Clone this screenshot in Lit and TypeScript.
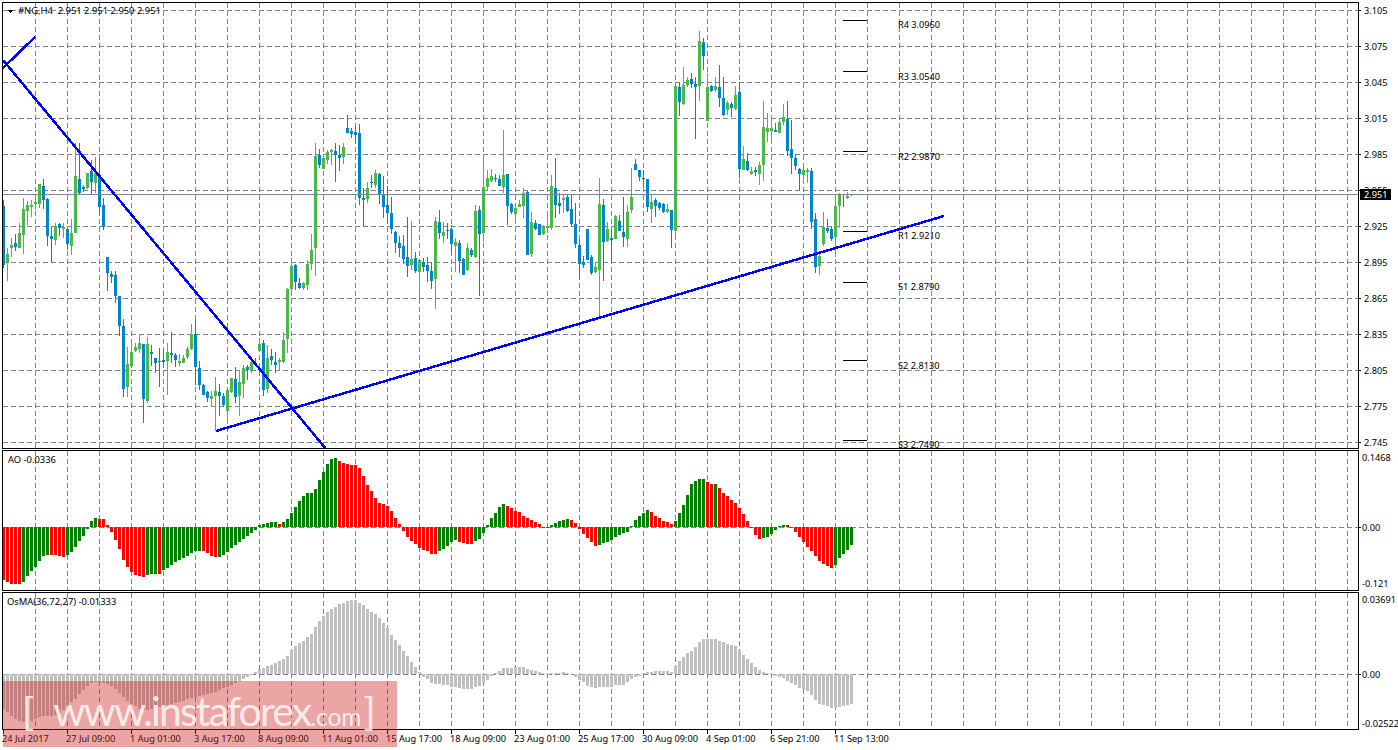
import { css, html, LitElement, svg } from 'lit';
import { customElement } from 'lit/decorators.js';

// one row per bar: green?, body top, body bottom, wick top, wick bottom (page pixels)
const CANDLES: number[][] = [
  [0,206,265,200,268],[1,254,263,248,281],[1,245,248,238,257],[0,243,247,234,251],[1,233,248,223,248],
  [1,209,235,198,254],[1,205,211,201,225],[1,205,207,200,217],[1,202,204,197,210],[1,184,204,184,208],
  [0,186,200,179,209],[0,199,236,198,246],[0,236,239,227,263],[1,226,240,223,245],[0,224,228,223,236],
  [1,227,229,223,238],[0,229,244,228,250],[1,233,246,219,255],[1,176,233,143,233],[0,179,193,143,195],
  [0,187,189,185,192],[1,173,188,173,189],[0,171,182,160,195],[1,173,183,157,193],[0,175,207,159,213],
  [0,205,227,198,230],[0,257,273,257,291],[0,274,277,271,283],[0,275,296,271,303],[0,296,326,296,336],
  [0,326,389,319,397],[1,364,387,347,397],[1,352,366,340,366],[1,347,351,343,352],[1,343,349,335,353],
  [0,344,399,344,423],[1,344,401,337,403],[0,352,354,345,366],[0,358,363,358,373],[0,361,362,348,387],
  [0,360,362,349,366],[1,352,361,343,395],[0,353,355,332,363],[0,355,360,353,367],[1,361,363,354,366],
  [1,358,363,355,363],[1,349,357,347,359],[1,334,349,324,350],[0,334,367,320,385],[0,368,385,361,390],
  [0,385,395,384,395],[0,392,398,391,402],[1,396,399,391,407],[1,391,396,377,431],[0,392,396,384,416],
  [0,396,405,393,407],[1,390,411,390,420],[1,378,392,378,393],[0,379,397,367,403],[1,382,396,371,416],
  [1,368,384,365,398],[0,367,370,365,380],[1,362,371,358,373],[0,363,365,358,365],[1,344,351,338,352],
  [0,343,390,340,396],[1,358,389,345,393],[0,356,360,349,365],[0,362,365,352,373],[1,360,362,358,370],
  [1,340,362,332,363],[1,289,339,288,353],[1,266,289,258,292],[0,265,282,264,290],[0,283,288,278,289],
  [1,283,288,282,290],[1,264,285,260,290],[1,250,264,234,270],[1,156,248,143,276],[0,155,165,149,168],
  [1,158,169,155,169],[1,152,160,150,164],[1,150,152,149,165],[0,151,155,143,182],[0,155,158,145,171],
  [1,147,157,143,164],[0,128,133,115,133],[0,131,134,128,138],[0,132,135,126,142],[0,133,198,124,205],
  [0,198,200,188,227],[1,188,199,182,203],[0,182,183,175,188],[1,173,185,170,188],[0,174,194,173,204],
  [0,194,207,176,218],[0,205,213,186,223],[0,213,229,197,234],[0,232,243,231,253],[0,243,248,236,257],
  [0,246,259,235,264],[0,257,266,217,277],[1,259,265,221,270],[0,258,271,252,273],[1,260,272,260,298],
  [0,262,267,258,272],[0,265,271,257,282],[0,271,281,263,289],[1,221,279,217,309],[0,222,233,210,239],
  [1,232,236,222,243],[0,230,231,223,239],[0,229,244,225,253],[1,242,246,238,272],[0,243,261,240,273],
  [0,259,275,258,275],[1,248,270,243,271],[0,250,255,248,257],[1,211,257,205,258],[0,210,234,206,296],
  [1,187,233,159,242],[1,178,187,170,190],[1,176,181,169,182],[0,178,179,174,182],[0,179,186,175,186],
  [1,175,187,130,193],[0,174,206,174,225],[0,204,212,203,214],[1,208,214,207,221],[1,204,207,200,207],
  [1,193,206,188,218],[0,192,255,191,255],[1,222,254,212,257],[0,223,229,220,230],[0,224,235,224,235],
  [1,226,234,225,235],[1,226,228,213,233],[1,186,228,175,230],[0,188,205,158,218],[0,203,206,193,214],
  [1,198,200,194,213],[0,197,211,195,212],[0,209,224,195,227],[0,224,244,203,248],[0,245,264,240,280],
  [0,262,265,256,268],[0,229,260,229,260],[0,257,273,255,275],[1,267,272,262,273],[1,204,270,178,317],
  [0,205,242,199,281],[1,229,241,222,242],[0,238,240,229,263],[1,216,239,215,239],[0,221,231,215,231],
  [0,232,237,197,247],[1,212,239,205,247],[1,197,210,168,213],[0,164,170,159,170],[0,170,177,170,181],
  [0,178,179,170,187],[0,179,207,179,212],[1,202,209,195,223],[0,200,206,198,217],[0,203,208,202,210],
  [0,204,212,203,213],[1,209,212,204,213],[0,210,230,210,248],[1,86,231,83,235],[0,87,102,83,116],
  [1,85,104,67,105],[1,80,85,77,87],[0,79,84,73,88],[0,84,87,77,139],[1,41,86,31,101],
  [0,42,56,38,70],[1,87,121,73,121],[0,86,91,85,92],[1,86,90,77,92],[0,87,98,65,107],
  [0,98,115,77,116],[1,103,110,101,115],[0,104,108,102,117],[1,95,109,86,110],[0,92,169,82,178],
  [1,159,170,146,170],[0,161,170,153,171],[1,171,174,167,175],[0,170,172,167,176],[1,165,174,162,185],
  [1,127,165,101,181],[1,128,132,113,142],[1,128,131,118,143],[0,130,132,123,132],[1,122,133,118,133],
  [1,117,122,104,125],[0,119,151,101,156],[0,149,158,120,174],[0,158,166,155,170],[0,169,174,168,190],
  [1,170,175,168,183],[1,170,172,168,183],[0,171,222,168,229],[0,219,267,213,273],[1,256,266,253,275],
  [1,227,244,212,246],[0,228,231,219,233],[0,229,239,226,241],[1,206,237,200,257],[1,195,206,193,228],
  [0,194,195,194,207],[1,196,198,192,199],[0,194,195,194,196],
];

// awesome oscillator, height in px from the zero row
const AO = [
  -53,-55,-57,-57,-57,-55,-49,-44,-40,-34,-29,-28,-28,-28,-29,-30,-28,-25,-20,-14,-9,-2,6,9,8,8,2,-5,-13,-22,
  -33,-40,-45,-48,-49,-50,-48,-47,-47,-47,-43,-41,-38,-35,-33,-31,-29,-26,-24,-24,-24,-26,-29,-30,-30,-28,-25,-21,-18,-15,
  -12,-9,-6,-3,2,3,4,5,5,3,5,8,14,20,26,31,34,34,38,47,55,63,68,69,66,64,63,62,62,59,
  51,42,36,29,24,23,21,16,9,3,-4,-10,-14,-17,-21,-23,-24,-27,-27,-24,-22,-19,-15,-13,-15,-16,-17,-17,-14,-12,
  -6,2,9,14,20,23,21,19,16,15,11,9,7,5,3,-1,-1,2,4,6,7,8,7,4,-2,-7,-11,-15,-19,-18,
  -16,-15,-13,-10,-8,-6,-5,1,7,11,14,17,15,11,9,6,5,3,6,14,22,32,43,46,48,48,45,43,43,39,
  34,31,27,24,19,13,6,-1,-8,-12,-11,-10,-7,-3,1,2,2,-1,-5,-10,-15,-20,-24,-29,-34,-37,-39,-41,-38,-31,
  -27,-23,-18,
];
const AO_RED = new Set([
  0,1,2,3,4,12,13,14,15,24,25,26,27,28,29,30,31,32,33,34,35,39,50,51,52,53,69,
  84,85,86,87,88,89,90,91,92,93,94,95,96,97,98,99,100,101,102,103,104,105,106,107,108,
  114,115,116,117,126,127,128,129,130,131,132,133,134,135,136,142,143,144,145,146,147,148,
  162,163,164,165,166,167,176,177,179,180,181,182,183,184,185,186,187,188,189,
  196,197,198,199,200,201,202,203,204,205,206,207,
]);

const OSMA = [
  -35,-38,-42,-45,-47,-48,-49,-47,-45,-43,-42,-42,-42,-41,-39,-36,-32,-28,-25,-20,-16,-12,-9,-8,-8,-9,-10,-12,-15,-19,
  -23,-27,-30,-32,-35,-36,-36,-35,-34,-33,-32,-31,-30,-29,-28,-27,-25,-24,-23,-22,-21,-20,-19,-18,-16,-14,-13,-11,-9,-7,
  -5,-3,-1,2,5,6,8,9,11,13,15,18,24,28,31,33,37,40,47,53,58,62,65,67,70,71,73,74,74,71,
  69,65,62,60,56,51,46,39,34,29,23,18,12,7,2,-3,-5,-9,-10,-10,-11,-11,-13,-13,-14,-15,-15,-15,-13,-12,
  -9,-6,-2,1,3,6,6,6,7,7,7,5,4,3,2,1,-1,1,1,1,2,1,0,-3,-6,-8,-12,-13,-14,-13,
  -13,-13,-13,-11,-11,-11,-8,-5,-3,-2,1,2,2,3,3,3,3,2,8,13,17,21,23,27,32,35,35,35,35,33,
  32,30,29,28,24,19,15,11,7,4,2,1,-1,-2,-3,-4,-7,-9,-11,-14,-15,-17,-21,-26,-30,-31,-32,-34,-34,-33,
  -32,-31,-30,
];

const MAIN_PRICES = ['3.105','3.075','3.045','3.015','2.985','2.955','2.925','2.895','2.865','2.835','2.805','2.775','2.745'];

const PIVOTS = [
  { name: 'R4 3.0960', mark: 20, text: 24 },
  { name: 'R3 3.0540', mark: 71, text: 76 },
  { name: 'R2 2.9870', mark: 151, text: 156 },
  { name: 'R1 2.9210', mark: 231, text: 235 },
  { name: 'S1 2.8790', mark: 282, text: 286 },
  { name: 'S2 2.8130', mark: 360, text: 365 },
  { name: 'S3 2.7490', mark: 440, text: 444 },
];

const TIMES = [
  '24 Jul 2017','27 Jul 09:00','1 Aug 01:00','3 Aug 17:00','8 Aug 09:00','11 Aug 01:00','15 Aug 17:00',
  '18 Aug 09:00','23 Aug 01:00','25 Aug 17:00','30 Aug 09:00','4 Sep 01:00','6 Sep 21:00','11 Sep 13:00',
];

const barX = (i: number) => 2 + 4 * i;

function gridV(top: number, bottom: number) {
  let d = '';
  for (let x = 35.5; x < 1358; x += 32) d += `M${x} ${top}V${bottom}`;
  return svg`<path class="grid" d=${d}></path>`;
}

function histogram(values: number[], zero: number, pick: (i: number) => boolean) {
  let d = '';
  values.forEach((v, i) => {
    if (!pick(i) || v === 0) return;
    const top = v > 0 ? zero - v : zero;
    d += `M${barX(i)} ${top}h3v${Math.abs(v)}h-3z`;
  });
  return d;
}

@customElement('app-root')
export class AppRoot extends LitElement {
  static styles = css`
    :host {
      display: block;
      width: 1398px;
      height: 750px;
      background: #fff;
      overflow: hidden;
    }

    .chart {
      position: relative;
      display: flex;
      flex-direction: column;
      width: 1398px;
      height: 750px;
      font-family: "Noto Sans", "Liberation Sans", sans-serif;
      font-size: 9.2px;
      color: #000;
    }

    svg {
      display: block;
      flex: none;
    }

    svg path,
    svg rect,
    svg line {
      shape-rendering: crispEdges;
    }

    svg text {
      font-family: "Noto Sans", "Liberation Sans", sans-serif;
      font-size: 9.2px;
      fill: #000;
    }

    svg text.title {
      font-size: 9.4px;
    }

    .grid {
      fill: none;
      stroke: #778899;
      stroke-width: 1;
      stroke-dasharray: 5 3;
    }

    .bid {
      stroke: #778899;
      stroke-width: 1;
    }

    .frame {
      fill: none;
      stroke: #000;
      stroke-width: 1;
    }

    .mark {
      stroke: #000;
      stroke-width: 1;
    }

    .trend {
      stroke: #0000ff;
      stroke-width: 2.5;
    }

    .up {
      fill: #4cb848;
    }

    .up-wick {
      fill: none;
      stroke: #4cb848;
    }

    .down {
      fill: #0085c8;
    }

    .down-wick {
      fill: none;
      stroke: #0085c8;
    }

    .ao-green {
      fill: #008000;
    }

    .ao-red {
      fill: #ff0000;
    }

    .osma {
      fill: #c0c0c0;
    }

    .bid-box {
      fill: #000;
    }

    svg text.bid-text {
      fill: #fff;
    }

    .time-axis {
      display: grid;
      grid-template-columns: repeat(14, 64px);
      padding-left: 3px;
      white-space: nowrap;
    }

    .time-tick {
      width: 1px;
      height: 4px;
      background: #000;
    }

    .time-label {
      line-height: 10px;
      margin-left: -1px;
    }

    .watermark {
      position: absolute;
      left: 3px;
      top: 681px;
      width: 394px;
      height: 66px;
      display: flex;
      align-items: baseline;
      box-sizing: border-box;
      padding: 2px 0 0 20px;
      background: rgba(204, 30, 30, 0.4);
      color: rgba(255, 255, 255, 0.8);
      font-family: Lato, "Liberation Sans", sans-serif;
      line-height: 56px;
      white-space: nowrap;
    }

    .wm-bracket {
      font-family: "Liberation Sans", sans-serif;
      font-size: 37px;
      transform: translateY(-3px);
    }

    .wm-site {
      font-size: 41px;
      letter-spacing: -1.9px;
      margin-left: 20px;
    }

    .wm-tld {
      font-size: 24.5px;
    }

    .wm-close {
      margin-left: 3px;
    }
  `;

  renderMain() {
    const up = CANDLES.map((c, i) => ({ c, i })).filter((o) => o.c[0] === 1);
    const down = CANDLES.map((c, i) => ({ c, i })).filter((o) => o.c[0] === 0);
    const wicks = (list: { c: number[]; i: number }[]) =>
      list.map(({ c, i }) => `M${barX(i) + 1.5} ${c[3]}V${c[4]}`).join('');
    const bodies = (list: { c: number[]; i: number }[]) =>
      list.map(({ c, i }) => `M${barX(i)} ${c[1]}h3v${Math.max(c[2] - c[1], 1)}h-3z`).join('');
    let rows = '';
    for (let y = 10.5; y < 448; y += 36) rows += `M3 ${y}H1358`;

    return html`
      <svg width="1398" height="449" viewBox="0 0 1398 449">
        <path class="grid" d=${rows}></path>
        ${gridV(3, 448)}
        <path class="up-wick" d=${wicks(up)}></path>
        <path class="down-wick" d=${wicks(down)}></path>
        <path class="up" d=${bodies(up)}></path>
        <path class="down" d=${bodies(down)}></path>
        <line class="bid" x1="3" y1="194.5" x2="1358" y2="194.5"></line>
        ${PIVOTS.map((p) => svg`
          <line class="mark" x1="843" y1=${p.mark + 0.5} x2="867" y2=${p.mark + 0.5}></line>
          <text x="898" y=${p.text + 3.5}>${p.name}</text>
        `)}
        <line class="trend" x1="3" y1="60" x2="326" y2="449"></line>
        <line class="trend" x1="3" y1="68" x2="35" y2="37"></line>
        <line class="trend" x1="216" y1="431" x2="944" y2="216"></line>
        <path d="M7 9.5h7l-3.5 3.5z" fill="#000"></path>
        <text class="title" x="18" y="13.5" xml:space="preserve">#NG,H4  2.951 2.951 2.950 2.951</text>
        <path class="frame" d="M2.5 449V2.5H1358.5V449"></path>
        <rect x="2" y="448" width="1357" height="1" fill="#000"></rect>
        ${MAIN_PRICES.map((p, k) => svg`
          <rect x="1359" y=${10 + 36 * k} width="2" height="1" fill="#000"></rect>
          <text x="1364" y=${13.5 + 36 * k}>${p}</text>
        `)}
        <rect class="bid-box" x="1360" y="189" width="31" height="11"></rect>
        <text class="bid-text" x="1364" y="198">2.951</text>
      </svg>
    `;
  }

  renderAo() {
    const zero = 527;
    return html`
      <svg width="1398" height="142" viewBox="0 449 1398 142">
        <path class="grid" d="M3 527.5H1358"></path>
        ${gridV(451, 590)}
        <path class="ao-green" d=${histogram(AO, zero, (i) => !AO_RED.has(i))}></path>
        <path class="ao-red" d=${histogram(AO, zero, (i) => AO_RED.has(i))}></path>
        <text class="title" x="8" y="462.5">AO -0.0336</text>
        <path class="frame" d="M2.5 591V450.5H1358.5V591"></path>
        <rect x="2" y="590" width="1357" height="1" fill="#000"></rect>
        <rect x="1359" y="527" width="2" height="1" fill="#000"></rect>
        <text x="1362" y="461">0.1468</text>
        <text x="1362" y="531">0.00</text>
        <text x="1362" y="587">-0.121</text>
      </svg>
    `;
  }

  renderOsma() {
    const zero = 674;
    return html`
      <svg width="1398" height="139" viewBox="0 591 1398 139">
        <path class="grid" d="M3 674.5H1358"></path>
        ${gridV(593, 729)}
        <path class="osma" d=${histogram(OSMA, zero, () => true)}></path>
        <text class="title" x="7" y="604.5">OsMA(36,72,27) -0.01333</text>
        <path class="frame" d="M2.5 730V592.5H1358.5V730"></path>
        <rect x="2" y="729" width="1357" height="1" fill="#000"></rect>
        <rect x="1359" y="674" width="2" height="1" fill="#000"></rect>
        <text x="1362" y="603">0.03691</text>
        <text x="1362" y="678">0.00</text>
        <text x="1362" y="727">-0.02522</text>
      </svg>
    `;
  }

  render() {
    return html`
      <div class="chart">
        ${this.renderMain()}
        ${this.renderAo()}
        ${this.renderOsma()}
        <div class="time-axis">
          ${TIMES.map((t) => html`
            <div>
              <div class="time-tick"></div>
              <div class="time-label">${t}</div>
            </div>
          `)}
        </div>
        <div class="watermark">
          <span class="wm-bracket">[</span>
          <span class="wm-site">www.instaforex</span>
          <span class="wm-tld">.com</span>
          <span class="wm-bracket wm-close">]</span>
        </div>
      </div>
    `;
  }
}
